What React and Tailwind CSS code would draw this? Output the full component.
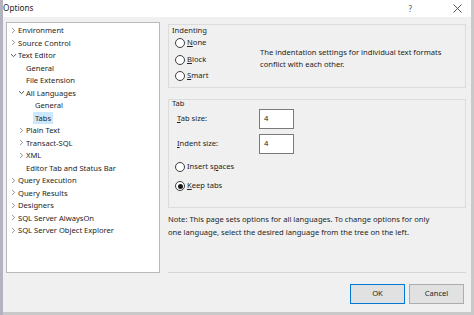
import { useState } from "react";

const treeItems = [
  { label: "Environment", level: 0, arrow: "right" },
  { label: "Source Control", level: 0, arrow: "right" },
  { label: "Text Editor", level: 0, arrow: "down" },
  { label: "General", level: 1 },
  { label: "File Extension", level: 1 },
  { label: "All Languages", level: 1, arrow: "down" },
  { label: "General", level: 2 },
  { label: "Tabs", level: 2, selected: true },
  { label: "Plain Text", level: 1, arrow: "right" },
  { label: "Transact-SQL", level: 1, arrow: "right" },
  { label: "XML", level: 1, arrow: "right" },
  { label: "Editor Tab and Status Bar", level: 1 },
  { label: "Query Execution", level: 0, arrow: "right" },
  { label: "Query Results", level: 0, arrow: "right" },
  { label: "Designers", level: 0, arrow: "right" },
  { label: "SQL Server AlwaysOn", level: 0, arrow: "right" },
  { label: "SQL Server Object Explorer", level: 0, arrow: "right" },
];

function Chevron({ dir }) {
  if (!dir) return <span className="w-[8px] shrink-0" />;
  return (
    <span className="w-[8px] shrink-0 flex items-center justify-center">
      {dir === "right" ? (
        <svg width="5" height="7" viewBox="0 0 5 7">
          <path d="M1.2 1 L3.6 3.5 L1.2 6" fill="none" stroke="#858585" strokeWidth="0.9" />
        </svg>
      ) : (
        <svg width="7" height="5" viewBox="0 0 7 5">
          <path d="M1 1.2 L3.5 3.6 L6 1.2" fill="none" stroke="#404040" strokeWidth="0.9" />
        </svg>
      )}
    </span>
  );
}

function TreeRow({ item }) {
  const pad = item.level === 0 ? "pl-[2px]" : item.level === 1 ? "pl-[10px]" : "pl-[19px]";
  return (
    <div className={`flex items-center h-[12.5px] ${pad}`}>
      <Chevron dir={item.arrow} />
      <span
        className={`leading-[12.5px] whitespace-nowrap ${
          item.selected ? "bg-[#cce8ff] px-[2px] -ml-[1px]" : "ml-[1px]"
        }`}
      >
        {item.label}
      </span>
    </div>
  );
}

function Radio({ checked, children }) {
  return (
    <div className="flex items-center gap-[2px] h-[12px]">
      <span className="w-[10px] h-[10px] rounded-full border border-[#3c3c3c] bg-white flex items-center justify-center">
        {checked && <span className="w-[5px] h-[5px] rounded-full bg-[#1a1a1a]" />}
      </span>
      <span>{children}</span>
    </div>
  );
}

function NumBox({ value }) {
  return (
    <div className="w-[35px] h-[20px] border border-[#7a7a7a] bg-white px-[4px] flex items-center">
      {value}
    </div>
  );
}

export default function App() {
  const [keepTabs] = useState(true);

  return (
    <div className="w-[474px] h-[315px] flex overflow-hidden text-[7.6px] text-[#1e1e1e] font-['Noto_Sans',sans-serif]">
      <div className="w-[3px] bg-[#b4b2bf] shrink-0" />
      <div className="flex-1 flex flex-col border-r-[3px] border-[#c9c9c9]">
        {/* title bar */}
        <div className="h-[17px] bg-white flex items-center shrink-0">
          <span className="text-[8.2px] ml-[0px]">Options</span>
          <span className="ml-auto mr-[41px] text-[8px] text-[#555]">?</span>
          <span className="mr-[9px]">
            <svg width="9" height="9" viewBox="0 0 9 9">
              <path d="M0.5 0.5 L8.5 8.5 M8.5 0.5 L0.5 8.5" stroke="#444" strokeWidth="0.9" />
            </svg>
          </span>
        </div>

        <div className="flex-1 bg-[#f0f0f0] flex flex-col">
          <div className="flex mt-[5px]">
            {/* tree */}
            <div className="ml-[3px] w-[154px] h-[251px] bg-white border border-[#b9b9b9] pt-[1px] shrink-0">
              {treeItems.map((item, i) => (
                <TreeRow key={i} item={item} />
              ))}
            </div>

            {/* right panel */}
            <div className="ml-[8px] w-[298px] h-[251px] flex flex-col">
              <div className="mt-[2px] h-[64px] border border-[#dcdcdc] px-[4px] flex">
                <div className="flex flex-col w-[80px]">
                  <span className="leading-[10px] -ml-[1px]">Indenting</span>
                  <div className="flex flex-col gap-[4.5px] mt-[2px] ml-[2px]">
                    <Radio><u>N</u>one</Radio>
                    <Radio><u>B</u>lock</Radio>
                    <Radio><u>S</u>mart</Radio>
                  </div>
                </div>
                <p className="mt-[21px] ml-[7px] w-[200px] leading-[12px]">
                  The indentation settings for individual text formats conflict with each other.
                </p>
              </div>

              <div className="mt-[11px] h-[109px] border border-[#dcdcdc] px-[4px] flex flex-col">
                <span className="leading-[9px] -mt-[1px] -ml-[1px]">Tab</span>
                <div className="flex items-center mt-[1px] ml-[4px]">
                  <span className="w-[82px]"><u>T</u>ab size:</span>
                  <NumBox value="4" />
                </div>
                <div className="flex items-center mt-[5px] ml-[4px]">
                  <span className="w-[82px]"><u>I</u>ndent size:</span>
                  <NumBox value="4" />
                </div>
                <div className="flex flex-col gap-[7px] mt-[7px] ml-[2px]">
                  <Radio checked={!keepTabs}>Insert s<u>p</u>aces</Radio>
                  <Radio checked={keepTabs}><u>K</u>eep tabs</Radio>
                </div>
              </div>

              <p className="mt-[5px] leading-[13px] w-[270px]">
                Note: This page sets options for all languages. To change options for only one
                language, select the desired language from the tree on the left.
              </p>

              <div className="mt-auto h-px bg-[#d5d5d5] w-[298px]" />
            </div>
          </div>

          {/* buttons */}
          <div className="flex justify-end gap-[4px] mt-[11px] pr-[7px]">
            <button className="w-[55px] h-[20px] bg-[#e1e1e1] border border-[#0078d7]">OK</button>
            <button className="w-[55px] h-[20px] bg-[#e1e1e1] border border-[#adadad]">Cancel</button>
          </div>
        </div>
        <div className="h-[3px] bg-[#c9c9c9] shrink-0" />
      </div>
    </div>
  );
}
